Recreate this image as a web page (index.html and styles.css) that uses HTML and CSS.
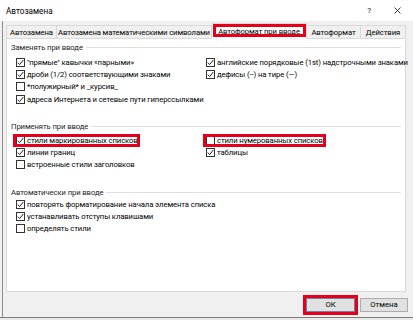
FILE: index.html
```html
<!DOCTYPE html>
<html lang="ru">
<head>
<meta charset="utf-8">
<title>Автозамена</title>
<link rel="stylesheet" href="styles.css">
</head>
<body>
<div class="window">
  <div class="titlebar">
    <span class="title">Автозамена</span>
    <span class="help">?</span>
    <svg class="close" width="7" height="7" viewBox="0 0 7 7"><path d="M0.5 0.5L6.5 6.5M6.5 0.5L0.5 6.5"/></svg>
  </div>
  <div class="frame">
    <div class="tabs">
      <div class="tab t1">Автозамена</div>
      <div class="tab t2">Автозамена математическими символами</div>
      <div class="tab t3 active">Автоформат при вводе</div>
      <div class="tab t4">Автоформат</div>
      <div class="tab t5">Действия</div>
    </div>
    <div class="panel">
      <section class="group g1">
        <div class="legend"><span>Заменять при вводе</span></div>
        <div class="cols">
          <div class="col">
            <div class="opt"><svg class="cb" viewBox="0 0 9 9"><rect x="0.5" y="0.5" width="8" height="8"/><path d="M1.8 4.6L3.6 6.6L7.3 2"/></svg><span>"прямые" кавычки «парными»</span></div>
            <div class="opt"><svg class="cb" viewBox="0 0 9 9"><rect x="0.5" y="0.5" width="8" height="8"/><path d="M1.8 4.6L3.6 6.6L7.3 2"/></svg><span>дроби (1/2) соответствующими знаками</span></div>
            <div class="opt"><svg class="cb" viewBox="0 0 9 9"><rect x="0.5" y="0.5" width="8" height="8"/></svg><span>*полужирный* и _курсив_</span></div>
            <div class="opt"><svg class="cb" viewBox="0 0 9 9"><rect x="0.5" y="0.5" width="8" height="8"/><path d="M1.8 4.6L3.6 6.6L7.3 2"/></svg><span>адреса Интернета и сетевые пути гиперссылками</span></div>
          </div>
          <div class="col">
            <div class="opt"><svg class="cb" viewBox="0 0 9 9"><rect x="0.5" y="0.5" width="8" height="8"/><path d="M1.8 4.6L3.6 6.6L7.3 2"/></svg><span>английские порядковые (1st) надстрочными знаками</span></div>
            <div class="opt"><svg class="cb" viewBox="0 0 9 9"><rect x="0.5" y="0.5" width="8" height="8"/><path d="M1.8 4.6L3.6 6.6L7.3 2"/></svg><span>дефисы (--) на тире (—)</span></div>
          </div>
        </div>
      </section>
      <section class="group g2">
        <div class="legend"><span>Применять при вводе</span></div>
        <div class="cols">
          <div class="col">
            <div class="opt mark mark-l"><svg class="cb" viewBox="0 0 9 9"><rect x="0.5" y="0.5" width="8" height="8"/><path d="M1.8 4.6L3.6 6.6L7.3 2"/></svg><span>стили маркированных списков</span></div>
            <div class="opt"><svg class="cb" viewBox="0 0 9 9"><rect x="0.5" y="0.5" width="8" height="8"/><path d="M1.8 4.6L3.6 6.6L7.3 2"/></svg><span>линии границ</span></div>
            <div class="opt"><svg class="cb" viewBox="0 0 9 9"><rect x="0.5" y="0.5" width="8" height="8"/></svg><span>встроенные стили заголовков</span></div>
          </div>
          <div class="col">
            <div class="opt mark mark-r"><svg class="cb" viewBox="0 0 9 9"><rect x="0.5" y="0.5" width="8" height="8"/></svg><span>стили нумерованных списков</span></div>
            <div class="opt"><svg class="cb" viewBox="0 0 9 9"><rect x="0.5" y="0.5" width="8" height="8"/><path d="M1.8 4.6L3.6 6.6L7.3 2"/></svg><span>таблицы</span></div>
          </div>
        </div>
      </section>
      <section class="group g3">
        <div class="legend"><span>Автоматически при вводе</span></div>
        <div class="cols">
          <div class="col">
            <div class="opt"><svg class="cb" viewBox="0 0 9 9"><rect x="0.5" y="0.5" width="8" height="8"/><path d="M1.8 4.6L3.6 6.6L7.3 2"/></svg><span>повторять форматирование начала элемента списка</span></div>
            <div class="opt"><svg class="cb" viewBox="0 0 9 9"><rect x="0.5" y="0.5" width="8" height="8"/><path d="M1.8 4.6L3.6 6.6L7.3 2"/></svg><span>устанавливать отступы клавишами</span></div>
            <div class="opt"><svg class="cb" viewBox="0 0 9 9"><rect x="0.5" y="0.5" width="8" height="8"/></svg><span>определять стили</span></div>
          </div>
        </div>
      </section>
    </div>
    <div class="footer">
      <button class="btn ok">ОК</button>
      <button class="btn">Отмена</button>
    </div>
  </div>
</div>
</body>
</html>
```
FILE: styles.css
```css
* { box-sizing: border-box; margin: 0; padding: 0; }
html, body { width: 413px; height: 320px; overflow: hidden; background: #e9e9e9; }
body { font-family: Roboto, "Noto Sans", sans-serif; font-size: 7.7px; letter-spacing: -0.1px; color: #000; }

.window { width: 413px; height: 318px; display: flex; flex-direction: column; background: #f0f0f0; border-bottom: 1px solid #7d7d7d; }

.titlebar { height: 21px; flex: none; background: #fff; display: flex; align-items: center; padding: 0 12px 0 6px; }
.title { flex: 1; font-size: 8.2px; letter-spacing: 0; }
.help { font-size: 8px; margin-right: 23px; color: #222; }
.close { display: block; stroke: #222; stroke-width: 0.9; fill: none; }

.frame { flex: 1; display: flex; flex-direction: column; margin-left: 2px; border-left: 1px solid #8c8c8c; padding-left: 3px; }

.tabs { height: 17px; flex: none; display: flex; align-items: flex-end; }
.tab { height: 13px; display: flex; align-items: center; justify-content: center; padding-top: 1px; white-space: nowrap; border: 1px solid #d9d9d9; border-left: none; border-bottom: none; background: #f0f0f0; }
.t1 { width: 51px; border-left: 1px solid #d9d9d9; }
.t2 { width: 155px; }
.t3 { width: 95px; height: 16px; padding-top: 0; padding-bottom: 1px; background: #fff; position: relative; margin-bottom: -1px; z-index: 1; }
.t3::after { content: ""; position: absolute; left: 1px; right: 0; top: 0; bottom: 2px; border: 3px solid #e2001a; }
.t4 { width: 54px; }
.t5 { width: 45px; }

.panel { width: 400px; height: 254px; flex: none; background: #fff; border: 1px solid #d9d9d9; padding: 2.5px 4px 0 4px; }

.legend { height: 12px; display: flex; align-items: center; color: #1e1e1e; }
.legend::after { content: ""; flex: 1; border-top: 1px solid #dedede; margin-left: 3px; }

.g2 { margin-top: 15.6px; }
.g3 { margin-top: 16.2px; }
.g1 .cols { margin-top: 2.7px; }
.g2 .cols { margin-top: 0.9px; }
.g3 .cols { margin-top: -0.8px; }

.cols { display: grid; grid-template-columns: 190px 1fr; padding-left: 5px; }
.col { display: flex; flex-direction: column; align-items: flex-start; }

.opt { height: 12.3px; display: flex; align-items: center; gap: 2px; white-space: nowrap; position: relative; }
.cb { width: 9px; height: 9px; flex: none; display: block; }
.cb rect { fill: #fff; stroke: #333; stroke-width: 1; }
.cb path { fill: none; stroke: #222; stroke-width: 1; }

.mark::after { content: ""; position: absolute; top: 0.3px; bottom: -0.5px; border: 3px solid #e2001a; }
.mark-l::after { left: -3px; right: -2px; }
.mark-r::after { left: -3px; right: -3px; }

.footer { flex: 1; display: flex; justify-content: flex-end; align-items: center; gap: 5px; padding-right: 5px; }
.btn { width: 48px; height: 14px; background: #e1e1e1; border: 1px solid #adadad; font-family: inherit; font-size: 7.7px; color: #000; display: flex; align-items: center; justify-content: center; }
.ok { width: 49px; position: relative; border-color: #6f7fa0; }
.ok::after { content: ""; position: absolute; left: -4px; right: -4px; top: -4px; bottom: -4px; border: 3px solid #e2001a; }
```
